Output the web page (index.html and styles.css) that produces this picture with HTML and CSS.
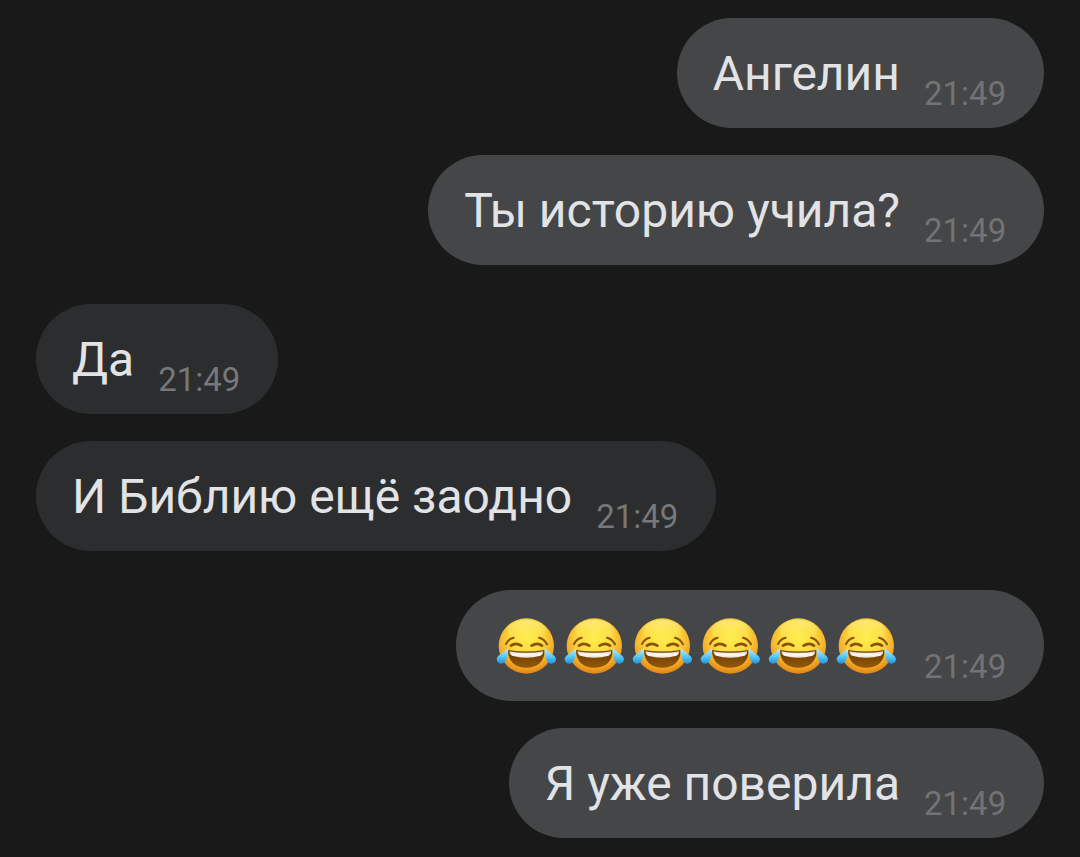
FILE: index.html
```html
<!DOCTYPE html>
<html lang="ru">
<head>
<meta charset="utf-8">
<meta name="viewport" content="width=device-width, initial-scale=1">
<title>Чат</title>
<link rel="stylesheet" href="styles.css">
</head>
<body>
<svg class="defs" aria-hidden="true">
  <defs>
    <radialGradient id="face" cx="0.5" cy="0.36" r="0.66">
      <stop offset="0" stop-color="#ffee4c"/>
      <stop offset="0.45" stop-color="#fcd940"/>
      <stop offset="0.75" stop-color="#f5b02b"/>
      <stop offset="1" stop-color="#df7d12"/>
    </radialGradient>
    <linearGradient id="shine" x1="0" y1="0" x2="0" y2="1">
      <stop offset="0" stop-color="#fff3a0" stop-opacity="0.6"/>
      <stop offset="1" stop-color="#fff04e" stop-opacity="0"/>
    </linearGradient>
    <linearGradient id="mouth" x1="0" y1="0" x2="0" y2="1">
      <stop offset="0" stop-color="#6b3a06"/>
      <stop offset="1" stop-color="#925806"/>
    </linearGradient>
    <linearGradient id="teeth" x1="0" y1="0" x2="0" y2="1">
      <stop offset="0" stop-color="#d9cfc0"/>
      <stop offset="0.5" stop-color="#fffaf2"/>
      <stop offset="1" stop-color="#e9dfd2"/>
    </linearGradient>
    <linearGradient id="tear" x1="0" y1="0" x2="0" y2="1">
      <stop offset="0" stop-color="#c5f0fb"/>
      <stop offset="0.5" stop-color="#62cdf6"/>
      <stop offset="1" stop-color="#1c94dd"/>
    </linearGradient>
    <symbol id="joy" viewBox="0 0 204 180">
      <circle cx="103" cy="90" r="83" fill="url(#face)"/>
      <ellipse cx="103" cy="44" rx="58" ry="32" fill="url(#shine)"/>
      <g fill="none" stroke="#8a5208" stroke-linecap="round">
        <path stroke-width="6" d="M42 84Q50 68 65 65M141 65Q156 68 165 85"/>
        <path stroke-width="8" d="M57 89Q71 78 88 89M119 89Q136 78 150 89"/>
      </g>
      <path fill="url(#mouth)" d="M48 102Q103 111 158 102C158 137 136 155 103 155S48 137 48 102Z"/>
      <path fill="url(#teeth)" d="M52 106Q103 115 154 106Q153 116 146 119Q103 131 60 119Q53 116 52 106Z"/>
      <path fill="url(#tear)" d="M48 96C50 108 46 132 36 140C28 147 14 142 14 130C14 117 38 109 48 96Z"/>
      <path fill="url(#tear)" d="M158 96C156 108 160 132 170 140C178 147 192 142 192 130C192 117 168 109 158 96Z"/>
    </symbol>
  </defs>
</svg>
<main class="chat">
  <section class="group group-out">
    <article class="bubble"><p class="text">Ангелин</p><time class="time">21:49</time></article>
    <article class="bubble"><p class="text">Ты историю учила?</p><time class="time">21:49</time></article>
  </section>
  <section class="group group-in">
    <article class="bubble"><p class="text">Да</p><time class="time">21:49</time></article>
    <article class="bubble"><p class="text">И Библию ещё заодно</p><time class="time">21:49</time></article>
  </section>
  <section class="group group-out">
    <article class="bubble">
      <p class="emojis" role="img" aria-label="Шесть смеющихся смайликов">
        <svg class="emoji"><use href="#joy"/></svg>
        <svg class="emoji"><use href="#joy"/></svg>
        <svg class="emoji"><use href="#joy"/></svg>
        <svg class="emoji"><use href="#joy"/></svg>
        <svg class="emoji"><use href="#joy"/></svg>
        <svg class="emoji"><use href="#joy"/></svg>
      </p>
      <time class="time">21:49</time>
    </article>
    <article class="bubble"><p class="text">Я уже поверила</p><time class="time">21:49</time></article>
  </section>
</main>
</body>
</html>
```
FILE: styles.css
```css
* {
  box-sizing: border-box;
}

body {
  margin: 0;
  background: #191919;
  color: #e1e3e6;
  font-family: Roboto, "Noto Sans", sans-serif;
}

.defs {
  position: absolute;
  width: 0;
  height: 0;
}

.chat {
  display: flex;
  flex-direction: column;
  gap: 39px;
  padding: 18px 36px;
}

.group {
  display: flex;
  flex-direction: column;
  gap: 27px;
}

.group-out {
  align-items: flex-end;
}

.group-in {
  align-items: flex-start;
}

.bubble {
  display: flex;
  align-items: flex-end;
  gap: 24px;
  padding: 26px 36px 14px;
  border-radius: 55px;
}

.group-out .bubble {
  background: #454647;
}

.group-in .bubble {
  background: #2c2d2e;
}

.text {
  margin: 0;
  padding: 2px 0 12px;
  font-size: 48px;
  line-height: 56px;
}

.time {
  min-width: 84px;
  color: #76787a;
  font-size: 33px;
  line-height: 40px;
}

.group-out .time {
  color: #717375;
}

.emojis {
  display: flex;
  margin: 0;
  padding-bottom: 11px;
}

.emoji {
  width: 68px;
  height: 60px;
}
```
